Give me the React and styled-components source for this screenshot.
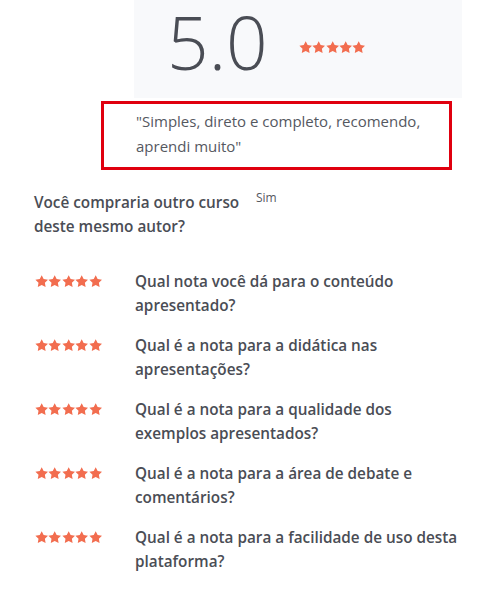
import React from "react";
import styled, { createGlobalStyle } from "styled-components";

const Global = createGlobalStyle`
  html, body { margin: 0; padding: 0; background: #fff; }
  body { font-family: "Open Sans", "Noto Sans", sans-serif; color: #4a4d55; }
`;

const Page = styled.div`
  width: 486px;
  height: 590px;
  overflow: hidden;
  display: flex;
  flex-direction: column;
`;

const ScorePanel = styled.div`
  margin-left: 134px;
  width: 328px;
  height: 98px;
  background: #f8f9fb;
  display: flex;
  align-items: flex-start;
  padding: 2px 0 0 33px;
  box-sizing: border-box;
  gap: 29px;
`;

const Score = styled.div`
  font-size: 73px;
  font-weight: 300;
  color: #4a4d55;
  line-height: 1.1;
  padding-right: 2px;
`;

const PanelStars = styled.div`
  align-self: center;
  margin-top: -6px;
`;

const Comment = styled.div`
  margin: 3px 0 0 101px;
  width: 351px;
  height: 69px;
  box-sizing: border-box;
  border: 3px solid #e0000f;
  padding: 5px 10px 0 32px;
  font-size: 15px;
  line-height: 25px;
  color: #55585f;
`;

const Question = styled.div`
  display: flex;
  margin: 20px 0 0 34px;
`;

const QuestionText = styled.div`
  width: 222px;
  font-size: 15.3px;
  font-weight: 600;
  line-height: 24px;
  color: #4a4d55;
`;

const Answer = styled.div`
  font-size: 12px;
  color: #55585f;
  margin-top: -1px;
`;

const List = styled.div`
  display: flex;
  flex-direction: column;
  gap: 16px;
  margin: 31px 0 0 35px;
`;

const Row = styled.div`
  display: flex;
  align-items: flex-start;
`;

const StarCell = styled.div`
  width: 100px;
  padding-top: 1px;
  flex-shrink: 0;
`;

const RowText = styled.div`
  font-size: 15.3px;
  font-weight: 600;
  line-height: 24px;
  color: #4a4d55;
  width: 326px;
`;

const StarsWrap = styled.span`
  display: inline-flex;
`;

const Star = () => (
  <svg width="13.4" height="12.3" viewBox="0 0 24 22">
    <path
      d="M12 0.3l3.5 7 7.8 1.1-5.6 5.4 1.3 7.7L12 17.8l-7 3.7 1.3-7.7L0.7 8.4l7.8-1.1z"
      fill="#f26d4f"
    />
  </svg>
);

const Stars = () => (
  <StarsWrap>
    {[0, 1, 2, 3, 4].map((i) => (
      <Star key={i} />
    ))}
  </StarsWrap>
);

const questions = [
  "Qual nota você dá para o conteúdo apresentado?",
  "Qual é a nota para a didática nas apresentações?",
  "Qual é a nota para a qualidade dos exemplos apresentados?",
  "Qual é a nota para a área de debate e comentários?",
  "Qual é a nota para a facilidade de uso desta plataforma?",
];

export default function App() {
  return (
    <Page>
      <Global />
      <ScorePanel>
        <Score>5.0</Score>
        <PanelStars>
          <Stars />
        </PanelStars>
      </ScorePanel>
      <Comment>"Simples, direto e completo, recomendo, aprendi muito"</Comment>
      <Question>
        <QuestionText>Você compraria outro curso deste mesmo autor?</QuestionText>
        <Answer>Sim</Answer>
      </Question>
      <List>
        {questions.map((q) => (
          <Row key={q}>
            <StarCell>
              <Stars />
            </StarCell>
            <RowText>{q}</RowText>
          </Row>
        ))}
      </List>
    </Page>
  );
}
